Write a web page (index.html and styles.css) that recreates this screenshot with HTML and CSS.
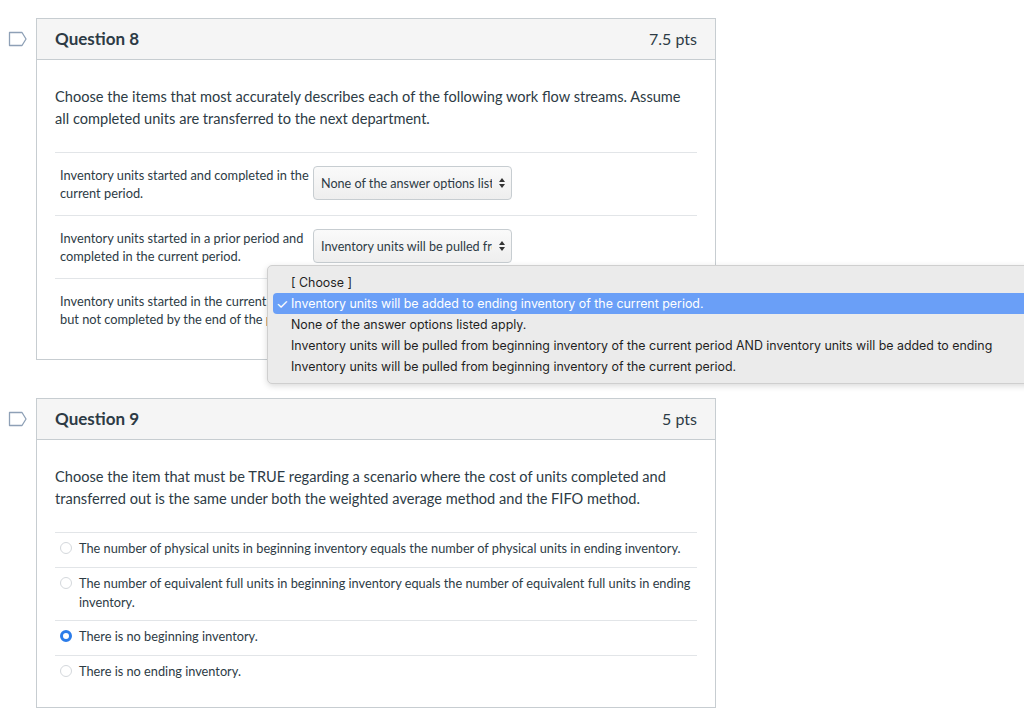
FILE: index.html
```html
<!DOCTYPE html>
<html>
<head>
<meta charset="utf-8">
<link rel="stylesheet" href="styles.css">
</head>
<body>
<div class="page">
  <div class="qrow">
    <div class="flag">
      <svg width="20" height="16" viewBox="0 0 20 16"><path d="M1.5 1.5 H14 L18 8 L14 14.5 H1.5 Z" fill="none" stroke="#8ea0b6" stroke-width="1.3" stroke-linejoin="round"/></svg>
    </div>
    <div class="question">
      <div class="qhead">
        <span class="qtitle">Question 8</span>
        <span class="qpts">7.5 pts</span>
      </div>
      <div class="qbody">
        <p class="qtext">Choose the items that most accurately describes each of the following work flow streams. Assume all completed units are transferred to the next department.</p>
        <div class="match">
          <div class="mrow">
            <div class="mlabel">Inventory units started and completed in the current period.</div>
            <div class="sel"><span class="seltext">None of the answer options listed apply.</span><svg class="arrows" width="8" height="12" viewBox="0 0 8 12"><path d="M4 1 L7 5 H1 Z M4 11 L7 7 H1 Z" fill="#333"/></svg></div>
          </div>
          <div class="mrow">
            <div class="mlabel">Inventory units started in a prior period and completed in the current period.</div>
            <div class="sel"><span class="seltext">Inventory units will be pulled from beginning inventory of the current period.</span><svg class="arrows" width="8" height="12" viewBox="0 0 8 12"><path d="M4 1 L7 5 H1 Z M4 11 L7 7 H1 Z" fill="#333"/></svg></div>
          </div>
          <div class="mrow">
            <div class="mlabel">Inventory units started in the current period but not completed by the end of the period.</div>
            <div class="sel"><span class="seltext">Inventory units will be added to ending inventory of the current period.</span><svg class="arrows" width="8" height="12" viewBox="0 0 8 12"><path d="M4 1 L7 5 H1 Z M4 11 L7 7 H1 Z" fill="#333"/></svg></div>
          </div>
        </div>
      </div>
    </div>
  </div>

  <div class="qrow">
    <div class="flag">
      <svg width="20" height="16" viewBox="0 0 20 16"><path d="M1.5 1.5 H14 L18 8 L14 14.5 H1.5 Z" fill="none" stroke="#8ea0b6" stroke-width="1.3" stroke-linejoin="round"/></svg>
    </div>
    <div class="question">
      <div class="qhead">
        <span class="qtitle">Question 9</span>
        <span class="qpts">5 pts</span>
      </div>
      <div class="qbody">
        <p class="qtext">Choose the item that must be TRUE regarding a scenario where the cost of units completed and transferred out is the same under both the weighted average method and the FIFO method.</p>
        <div class="answers">
          <div class="ans"><span class="radio"></span><span class="atext">The number of physical units in beginning inventory equals the number of physical units in ending inventory.</span></div>
          <div class="ans"><span class="radio"></span><span class="atext">The number of equivalent full units in beginning inventory equals the number of equivalent full units in ending inventory.</span></div>
          <div class="ans"><span class="radio checked"></span><span class="atext">There is no beginning inventory.</span></div>
          <div class="ans"><span class="radio"></span><span class="atext">There is no ending inventory.</span></div>
        </div>
      </div>
    </div>
  </div>
</div>

<div class="menu">
  <div class="opt">[ Choose ]</div>
  <div class="opt active"><span class="check">✓</span>Inventory units will be added to ending inventory of the current period.</div>
  <div class="opt">None of the answer options listed apply.</div>
  <div class="opt long">Inventory units will be pulled from beginning inventory of the current period AND inventory units will be added to ending inventory of the current period.</div>
  <div class="opt">Inventory units will be pulled from beginning inventory of the current period.</div>
</div>
</body>
</html>
```

FILE: styles.css
```css
html, body {
  margin: 0;
  padding: 0;
  background: #fff;
}
body {
  font-family: Lato, "Liberation Sans", sans-serif;
  color: #2d3b45;
  width: 1024px;
  height: 713px;
  overflow: hidden;
  position: relative;
}
.page {
  padding-top: 18px;
  display: flex;
  flex-direction: column;
  gap: 38px;
}
.qrow {
  display: flex;
}
.flag {
  width: 36px;
  flex: none;
  padding-top: 13px;
  padding-left: 8px;
  box-sizing: border-box;
}
.flag svg { display: block; }
.question {
  width: 680px;
  box-sizing: border-box;
  border: 1px solid #c7cdd1;
}
.qhead {
  height: 41px;
  box-sizing: border-box;
  padding: 0 18px 2px;
  background: #f5f5f5;
  border-bottom: 1px solid #c7cdd1;
  display: flex;
  align-items: center;
  justify-content: space-between;
}
.qtitle {
  font-weight: 700;
  font-size: 17px;
}
.qpts {
  font-size: 16px;
}
.qbody {
  padding: 26px 18px 17px;
}
.qtext {
  margin: 0 0 22px;
  font-size: 14.6px;
  line-height: 22px;
}
.mrow {
  border-top: 1px solid #e2e5e8;
  display: flex;
  align-items: flex-start;
  padding: 13px 0 13px 5px;
  height: 36px;
}
.mrow:last-child { padding-bottom: 14px; }
.mlabel {
  width: 253px;
  font-size: 12.8px;
  line-height: 18px;
}
.sel {
  width: 199px;
  height: 34px;
  box-sizing: border-box;
  border: 1px solid #c7cdd1;
  border-radius: 4px;
  background: linear-gradient(#fafafa, #eeeeee);
  display: flex;
  align-items: center;
  padding: 0 5px 0 7px;
  font-size: 12.6px;
  color: #2d3b45;
}
.seltext {
  flex: 1;
  white-space: nowrap;
  overflow: hidden;
}
.arrows {
  flex: none;
  margin-left: 6px;
}
.ans {
  border-top: 1px solid #e2e5e8;
  display: flex;
  align-items: flex-start;
  padding: 6px 0 10px 5px;
  font-size: 12.75px;
  line-height: 18px;
}
.ans:nth-child(2) { line-height: 19px; padding-bottom: 8px; }
.radio {
  flex: none;
  width: 12px;
  height: 12px;
  box-sizing: border-box;
  border: 1px solid #d4d8dc;
  border-radius: 50%;
  margin: 3px 7px 0 0;
  background: #fff;
}
.radio.checked {
  border: 3px solid #2b7ce9;
  background: #fff;
}
.atext {
  flex: 1;
  padding-right: 6px;
}
.menu {
  position: absolute;
  left: 267px;
  top: 265px;
  width: 780px;
  box-sizing: border-box;
  padding: 6px 5px;
  background: #ebebeb;
  border: 1px solid #cfcfcf;
  border-radius: 5px;
  box-shadow: 0 2px 6px rgba(0,0,0,0.15);
  font-family: Inter, "Noto Sans", sans-serif;
  font-size: 12.4px;
  color: #1f1f1f;
}
.opt {
  height: 21px;
  line-height: 21px;
  padding-left: 18px;
  white-space: nowrap;
  overflow: hidden;
  position: relative;
}
.opt.long {
  white-space: normal;
  width: 712px;
}
.opt.active {
  background: #6a9ff7;
  color: #fff;
  border-radius: 4px;
}
.check {
  position: absolute;
  left: 3px;
  top: 0;
  font-size: 14px;
}
```
